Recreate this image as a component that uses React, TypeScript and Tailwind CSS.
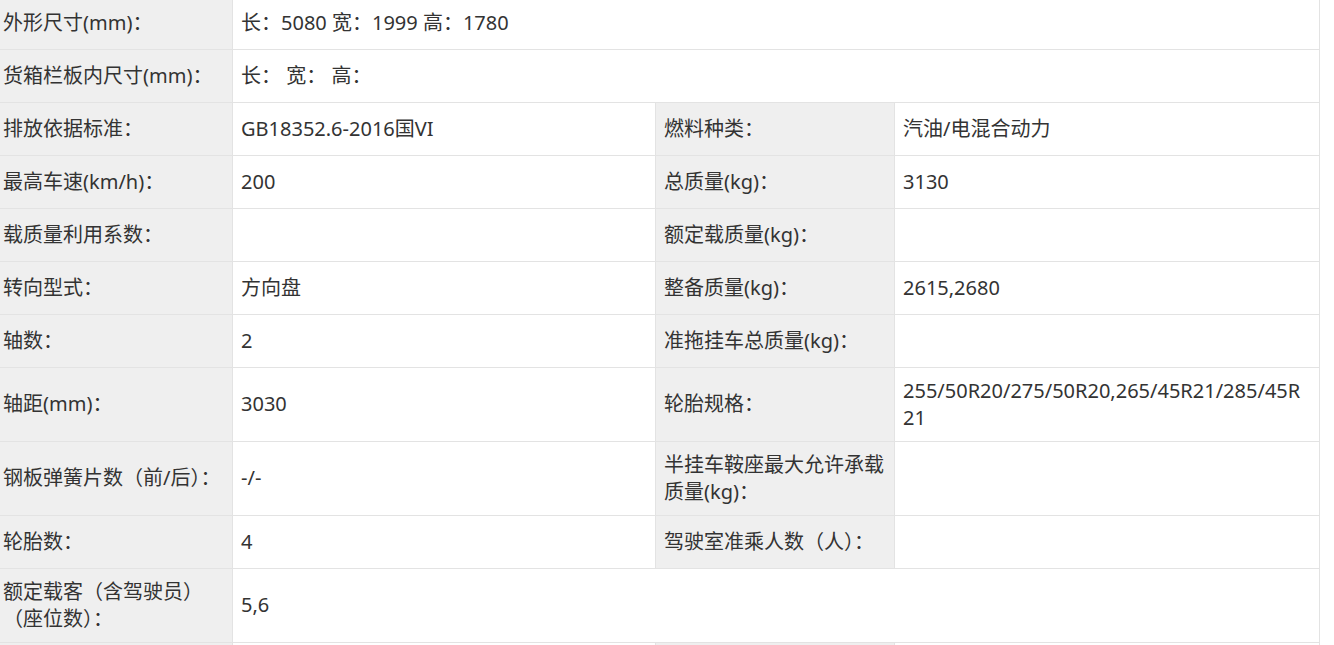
import React from "react";

type Cell = { text: React.ReactNode; label?: boolean; span?: number };

const rows: Cell[][] = [
  [{ text: "外形尺寸(mm)：", label: true }, { text: "长：5080 宽：1999 高：1780", span: 3 }],
  [{ text: "货箱栏板内尺寸(mm)：", label: true }, { text: "长： 宽： 高：", span: 3 }],
  [
    { text: "排放依据标准：", label: true },
    { text: "GB18352.6-2016国VI" },
    { text: "燃料种类：", label: true },
    { text: "汽油/电混合动力" },
  ],
  [
    { text: "最高车速(km/h)：", label: true },
    { text: "200" },
    { text: "总质量(kg)：", label: true },
    { text: "3130" },
  ],
  [
    { text: "载质量利用系数：", label: true },
    { text: "" },
    { text: "额定载质量(kg)：", label: true },
    { text: "" },
  ],
  [
    { text: "转向型式：", label: true },
    { text: "方向盘" },
    { text: "整备质量(kg)：", label: true },
    { text: "2615,2680" },
  ],
  [
    { text: "轴数：", label: true },
    { text: "2" },
    { text: "准拖挂车总质量(kg)：", label: true },
    { text: "" },
  ],
  [
    { text: "轴距(mm)：", label: true },
    { text: "3030" },
    { text: "轮胎规格：", label: true },
    { text: "255/50R20/275/50R20,265/45R21/285/45R21" },
  ],
  [
    { text: "钢板弹簧片数（前/后）：", label: true },
    { text: "-/-" },
    { text: "半挂车鞍座最大允许承载质量(kg)：", label: true },
    { text: "" },
  ],
  [
    { text: "轮胎数：", label: true },
    { text: "4" },
    { text: "驾驶室准乘人数（人）：", label: true },
    { text: "" },
  ],
  [
    {
      text: (
        <>
          额定载客（含驾驶员）
          <br />
          （座位数）：
        </>
      ),
      label: true,
    },
    { text: "5,6", span: 3 },
  ],
  [
    { text: "", label: true },
    { text: "" },
    { text: "", label: true },
    { text: "" },
  ],
];

export default function App() {
  return (
    <div
      className="w-[1334px] h-[645px] overflow-hidden bg-white text-[#333333] text-[20px] leading-[26.5px]"
      style={{ fontFamily: '"Noto Sans", "Noto Sans CJK SC", sans-serif' }}
    >
      <div className="-mt-[3px] w-[1320px] border-r border-[#e3e3e3] bg-[#e3e3e3] grid grid-cols-[232px_422px_238px_424px] gap-px">
        {rows.map((row, i) =>
          row.map((c, j) => (
            <div
              key={`${i}-${j}`}
              className={
                (c.label ? "bg-[#efefef] " : "bg-white ") +
                (j === 0 ? "pl-[3px] pr-2 " : "pl-2 pr-2 ") +
                (c.span === 3 ? "col-span-3 " : "") +
                "min-h-[52px] py-[10px] flex items-center break-all"
              }
            >
              <span>{c.text}</span>
            </div>
          ))
        )}
      </div>
    </div>
  );
}
